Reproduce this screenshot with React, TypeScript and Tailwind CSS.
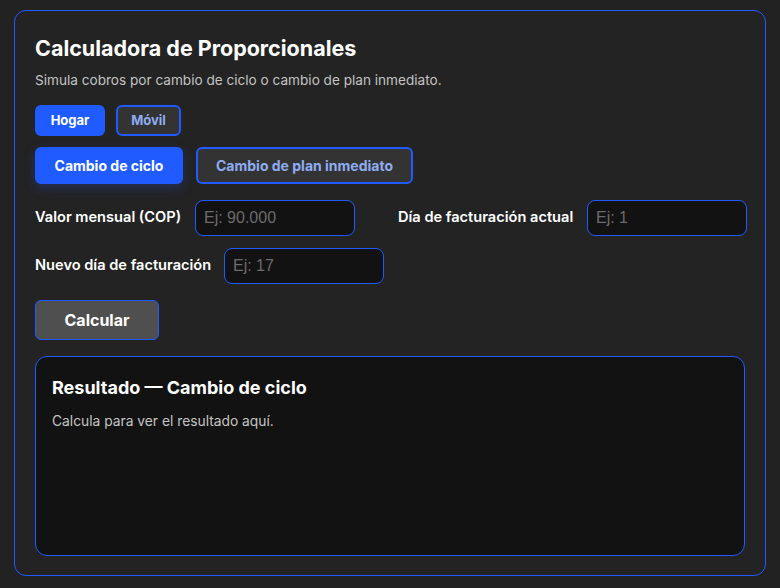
import React from "react";

export default function App() {
  return (
    <div className="min-h-[588px] w-[780px] bg-[#222222] p-[10px_14px_12px_14px] font-['Inter',sans-serif]">
      <div className="h-[566px] rounded-[12px] border border-[#1f5bff] bg-[#232323] px-5 pt-[23px]">
        <h1 className="text-[21.5px] font-bold leading-[28px] text-white">Calculadora de Proporcionales</h1>
        <p className="mt-[9px] text-[13.6px] leading-[18px] text-[#c4c4c4]">
          Simula cobros por cambio de ciclo o cambio de plan inmediato.
        </p>
        <div className="mt-[16px] flex gap-[11px]">
          <button className="h-[31px] w-[70px] rounded-[6px] bg-[#1f5bff] text-[13px] font-bold text-white">Hogar</button>
          <button className="h-[31px] w-[65px] rounded-[6px] border-2 border-[#1f5bff] bg-[#333333] text-[13px] font-bold text-[#8eadf0]">Móvil</button>
        </div>
        <div className="mt-[11px] flex gap-[13px]">
          <button className="h-[37px] w-[148px] rounded-[6px] bg-[#1f5bff] text-[14px] font-bold text-white shadow-[0_4px_12px_rgba(31,91,255,0.25)]">Cambio de ciclo</button>
          <button className="h-[37px] w-[217px] rounded-[6px] border-2 border-[#1f5bff] bg-[#333333] text-[14px] font-bold text-[#8eadf0]">Cambio de plan inmediato</button>
        </div>
        <div className="mt-[16px] flex items-center">
          <label className="w-[147px] shrink-0 whitespace-nowrap text-[14.6px] font-semibold text-white">Valor mensual (COP)</label>
          <input placeholder="Ej: 90.000" className="ml-[13px] h-[36px] w-[160px] shrink-0 rounded-[8px] border border-[#1f5bff] bg-[#121212] px-[8px] text-[16px] text-white placeholder:text-[#6b6b6b] outline-none font-['Liberation_Sans',sans-serif]" />
          <label className="ml-[43px] w-[177px] shrink-0 whitespace-nowrap text-[14.6px] font-semibold text-white">Día de facturación actual</label>
          <input placeholder="Ej: 1" className="ml-[12px] h-[36px] w-[160px] shrink-0 rounded-[8px] border border-[#1f5bff] bg-[#121212] px-[8px] text-[16px] text-white placeholder:text-[#6b6b6b] outline-none font-['Liberation_Sans',sans-serif]" />
        </div>
        <div className="mt-[12px] flex items-center">
          <label className="w-[177px] shrink-0 whitespace-nowrap text-[14.6px] font-semibold text-white">Nuevo día de facturación</label>
          <input placeholder="Ej: 17" className="ml-[12px] h-[36px] w-[160px] shrink-0 rounded-[8px] border border-[#1f5bff] bg-[#121212] px-[8px] text-[16px] text-white placeholder:text-[#6b6b6b] outline-none font-['Liberation_Sans',sans-serif]" />
        </div>
        <button className="mt-[16px] h-[40px] w-[124px] rounded-[6px] border border-[#1f5bff] bg-[#4f4f4f] text-[16px] font-bold text-white">Calcular</button>
        <div className="mt-[16px] h-[200px] rounded-[12px] border border-[#1f5bff] bg-[#121212] px-[16px] pt-[19px]">
          <h2 className="text-[18px] font-bold leading-[24px] text-white">Resultado — Cambio de ciclo</h2>
          <p className="mt-[11px] text-[13.8px] text-[#c4c4c4]">Calcula para ver el resultado aquí.</p>
        </div>
      </div>
    </div>
  );
}
